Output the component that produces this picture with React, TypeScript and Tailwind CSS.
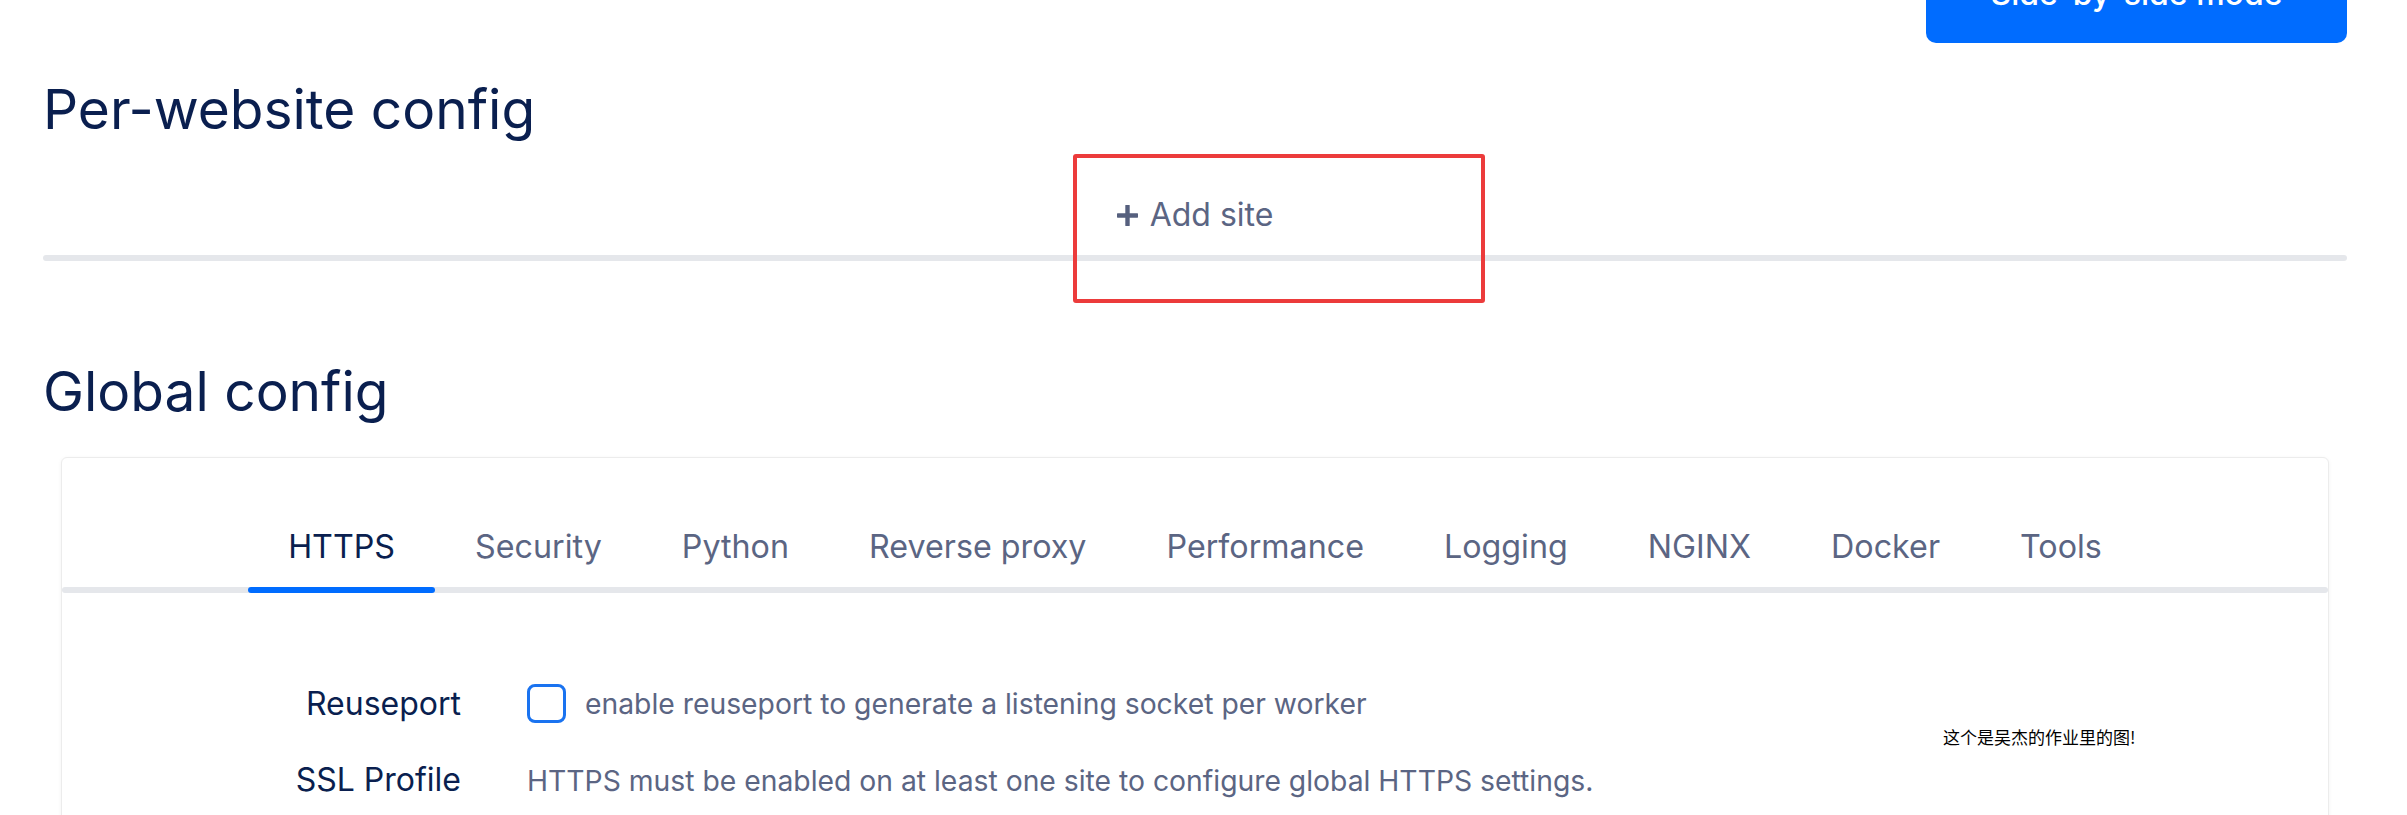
import React from "react";

const tabs = ["HTTPS", "Security", "Python", "Reverse proxy", "Performance", "Logging", "NGINX", "Docker", "Tools"];

function PlusIcon() {
  return (
    <svg width="21" height="21" viewBox="0 0 21 21" className="shrink-0">
      <line x1="10.5" y1="1" x2="10.5" y2="20" stroke="#56607e" strokeWidth="4.4" strokeLinecap="round" />
      <line x1="1" y1="10.5" x2="20" y2="10.5" stroke="#56607e" strokeWidth="4.4" strokeLinecap="round" />
    </svg>
  );
}

export default function App() {
  return (
    <div className="relative h-[815px] overflow-hidden bg-white font-['Inter','Noto_Sans',sans-serif]">
      <div className="ml-[43px] w-[2304px]">
        <div className="flex justify-end">
          <button className="-mt-[55px] h-[98px] w-[421px] rounded-[10px] bg-[#006cff] text-[32px] font-medium leading-[48px] text-white">
            Side-by-side mode
          </button>
        </div>

        <h2 className="mt-[34px] text-[55px] font-normal leading-[65px] text-[#0a1f4f]">Per-website config</h2>

        <div className="relative mt-[49px]">
          <div className="flex justify-center">
            <div className="flex items-center gap-[12px] pb-[16px] text-[32px] leading-[48px] text-[#5b6583]">
              <PlusIcon />
              <span>Add site</span>
            </div>
          </div>
          <div className="h-[6px] rounded-full bg-[#e5e7eb]" />
        </div>

        <h2 className="mt-[98px] text-[55px] font-normal leading-[65px] text-[#0a1f4f]">Global config</h2>

        <div className="relative mx-[18px] mt-[33px] h-[420px] rounded-[6px] border border-[#ececec] bg-white shadow-[0_1px_4px_rgba(0,0,0,0.05)]">
          <div className="relative pt-[65px]">
            <div className="flex justify-center">
              {tabs.map((t, i) => (
                <div
                  key={t}
                  className={
                    i === 0
                      ? "relative px-[40px] pb-[16px] text-[32.25px] leading-[48px] text-[#0a1f4f]"
                      : "relative px-[40px] pb-[16px] text-[32.25px] leading-[48px] text-[#5b6583]"
                  }
                >
                  {t}
                  {i === 0 && <div className="absolute bottom-[-6px] left-0 right-0 h-[6px] rounded-full bg-[#006cff]" />}
                </div>
              ))}
            </div>
            <div className="h-[6px] rounded-full bg-[#e5e7eb]" />
          </div>

          <div className="mt-[91px] grid grid-cols-[399px_1fr] gap-x-[66px] gap-y-[35px]">
            <div className="flex h-[39px] items-center justify-end text-[32px] leading-[44px] text-[#0a1f4f]">Reuseport</div>
            <div className="flex h-[39px] items-center gap-[19px]">
              <div className="h-[39px] w-[39px] rounded-[8px] border-[3px] border-[#1a73f0] bg-white" />
              <span className="text-[28.3px] leading-[44px] text-[#5b6583]">enable reuseport to generate a listening socket per worker</span>
            </div>
            <div className="self-baseline text-right text-[32px] leading-[44px] text-[#0a1f4f]">SSL Profile</div>
            <div className="self-baseline text-[28.3px] leading-[44px] text-[#5b6583]">
              HTTPS must be enabled on at least one site to configure global HTTPS settings.
            </div>
          </div>

          <div className="absolute left-[1881px] top-[266px] font-['Noto_Sans_CJK_SC',sans-serif] text-[17px] leading-[25px] text-black">
            这个是吴杰的作业里的图!
          </div>
        </div>
      </div>

      <div className="absolute left-[1073px] top-[154px] h-[149px] w-[412px] rounded-[3px] border-[4px] border-[#ec3b3b]" />
    </div>
  );
}
